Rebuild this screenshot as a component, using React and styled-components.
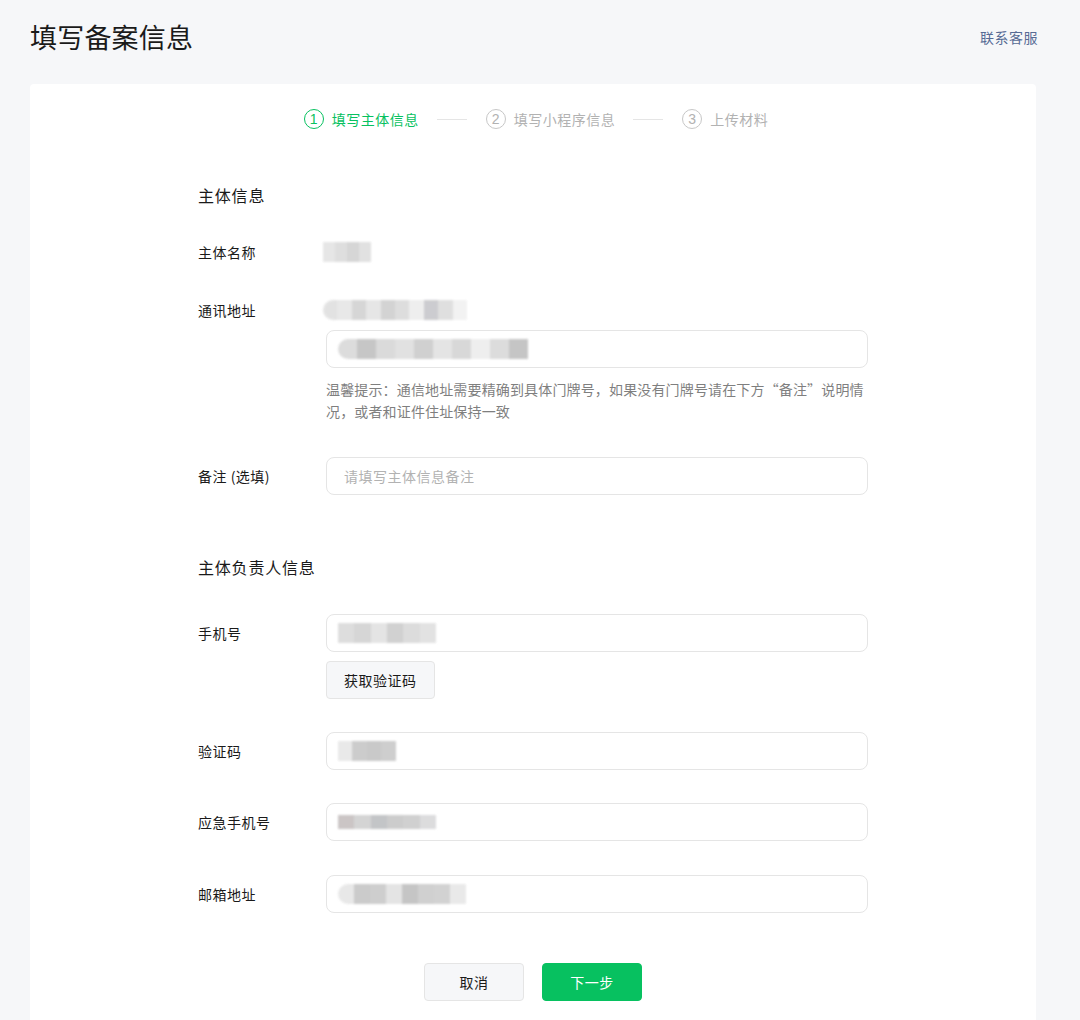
import React from "react";
import styled, { createGlobalStyle } from "styled-components";

const GlobalStyle = createGlobalStyle`
  html, body {
    margin: 0;
    padding: 0;
    background: #f6f7f9;
  }
  body {
    font-family: "Noto Sans CJK SC", "Noto Sans", sans-serif;
    color: #1a1a1a;
    letter-spacing: 0.5px;
  }
  * { box-sizing: border-box; }
`;

const Page = styled.div`
  padding: 0 44px 0 30px;
  min-height: 1020px;
`;

const Header = styled.div`
  height: 76px;
  display: flex;
  align-items: center;
  justify-content: space-between;
  h1 {
    margin: 0 0 3px;
    font-size: 27px;
    font-weight: 400;
    color: #1a1a1a;
    letter-spacing: 0.2px;
  }
  a {
    font-size: 14px;
    color: #576b95;
    text-decoration: none;
    margin-right: -2px;
    margin-bottom: 2px;
  }
`;

const Card = styled.div`
  margin-top: 8px;
  background: #fff;
  border-radius: 4px;
  padding: 24px 0 40px;
`;

const Steps = styled.div`
  display: flex;
  align-items: center;
  justify-content: center;
  height: 24px;
  padding-left: 6px;
  margin-top: -1px;
`;

const Step = styled.div`
  display: flex;
  align-items: center;
  gap: 8px;
  font-size: 14px;
  color: ${(p) => (p.$active ? "#07c160" : "#b2b2b2")};
`;

const StepNum = styled.span`
  width: 20px;
  height: 20px;
  border-radius: 50%;
  border: 1px solid ${(p) => (p.$active ? "#07c160" : "#c7c7c7")};
  display: flex;
  align-items: center;
  justify-content: center;
  font-size: 14px;
  line-height: 1;
  letter-spacing: 0;
  font-family: "Liberation Sans", sans-serif;
`;

const StepLine = styled.span`
  width: 30px;
  height: 1px;
  background: #e5e5e5;
  margin: 0 19px 0 18px;
`;

const Form = styled.div`
  width: 670px;
  margin: 0 auto;
`;

const SectionTitle = styled.div`
  font-size: 16px;
  line-height: 24px;
  letter-spacing: 0.8px;
  color: #1a1a1a;
  margin-top: ${(p) => p.$mt}px;
`;

const Row = styled.div`
  display: grid;
  grid-template-columns: 128px 1fr;
  margin-top: ${(p) => p.$mt}px;
`;

const Label = styled.div`
  font-size: 14px;
  line-height: 38px;
  color: #1a1a1a;
`;

const Content = styled.div`
  display: flex;
  flex-direction: column;
  align-items: flex-start;
`;

const StaticValue = styled.div`
  height: 38px;
  display: flex;
  align-items: center;
  margin-left: -3px;
`;

const Input = styled.div`
  width: 542px;
  height: 38px;
  border: 1px solid #e5e5e5;
  border-radius: 8px;
  display: flex;
  align-items: center;
  padding: 0 11px;
  font-size: 14px;
  color: #b2b2b2;
  margin-top: ${(p) => p.$mt || 0}px;
`;

const Placeholder = styled.span`
  padding-left: 6px;
`;

const Hint = styled.div`
  margin-top: 10px;
  font-size: 14px;
  line-height: 22px;
  letter-spacing: 0.15px;
  color: #7f7f7f;
  width: 545px;
`;

const Blur = styled.span`
  display: inline-block;
  width: ${(p) => p.$w}px;
  height: ${(p) => p.$h || 20}px;
  border-radius: ${(p) => (p.$round ? "10px 0 0 10px" : "0")};
  filter: blur(0.8px);
  opacity: 0.85;
`;

const GhostButton = styled.button`
  height: 38px;
  padding: 0 17px;
  margin-top: ${(p) => p.$mt || 0}px;
  border: 1px solid #e5e5e5;
  border-radius: 4px;
  background: #f6f7f9;
  font-family: inherit;
  font-size: 14px;
  letter-spacing: 0.5px;
  color: #1a1a1a;
  cursor: pointer;
`;

const Actions = styled.div`
  display: flex;
  justify-content: center;
  gap: 18px;
  margin-top: 50px;
`;

const ActionButton = styled.button`
  width: 100px;
  height: 38px;
  border-radius: 4px;
  border: 1px solid ${(p) => (p.$primary ? "#07c160" : "#e5e5e5")};
  background: ${(p) => (p.$primary ? "#07c160" : "#f6f7f9")};
  color: ${(p) => (p.$primary ? "#fff" : "#1a1a1a")};
  font-family: inherit;
  font-size: 14px;
  letter-spacing: 0.5px;
  cursor: pointer;
`;

// greys used to fake the pixelated, blurred values
const blurBg = (tones) => {
  const step = 100 / tones.length;
  const stops = tones
    .map((t, i) => `${t} ${(i * step).toFixed(1)}%, ${t} ${((i + 1) * step).toFixed(1)}%`)
    .join(", ");
  return `linear-gradient(90deg, ${stops})`;
};

const Masked = ({ w, h, tones, round }) => (
  <Blur $w={w} $h={h} $round={round} style={{ background: blurBg(tones) }} />
);

const steps = [
  { n: 1, label: "填写主体信息", active: true },
  { n: 2, label: "填写小程序信息" },
  { n: 3, label: "上传材料" },
];

export default function App() {
  return (
    <>
      <GlobalStyle />
      <Page>
        <Header>
          <h1>填写备案信息</h1>
          <a href="#">联系客服</a>
        </Header>
        <Card>
          <Steps>
            {steps.map((s, i) => (
              <React.Fragment key={s.n}>
                {i > 0 && <StepLine />}
                <Step $active={s.active}>
                  <StepNum $active={s.active}>{s.n}</StepNum>
                  {s.label}
                </Step>
              </React.Fragment>
            ))}
          </Steps>

          <Form>
            <SectionTitle $mt={52}>主体信息</SectionTitle>

            <Row $mt={26}>
              <Label>主体名称</Label>
              <Content>
                <StaticValue>
                  <Masked w={48} tones={["#e2e2e2", "#d9d9d9", "#cfcfcf", "#dcdcdc"]} />
                </StaticValue>
              </Content>
            </Row>

            <Row $mt={20}>
              <Label>通讯地址</Label>
              <Content>
                <StaticValue>
                  <Masked
                    w={144}
                    round
                    tones={["#dedede", "#e4e4e4", "#d0d0d0", "#e2e2e2", "#cccccc", "#d8d8d8", "#ececec", "#c4c4c8", "#dadada", "#f0f0f0"]}
                  />
                </StaticValue>
                <Input $mt={1}>
                  <Masked
                    w={190}
                    round
                    tones={["#d6d6d6", "#bdbdbd", "#d4d4d4", "#dcdcdc", "#c8c8c8", "#e0e0e0", "#d2d2d2", "#ececec", "#d6d6d6", "#bcbcbc"]}
                  />
                </Input>
                <Hint>
                  温馨提示：通信地址需要精确到具体门牌号，如果没有门牌号请在下方“备注”说明情况，或者和证件住址保持一致
                </Hint>
              </Content>
            </Row>

            <Row $mt={35}>
              <Label>备注 (选填)</Label>
              <Content>
                <Input>
                  <Placeholder>请填写主体信息备注</Placeholder>
                </Input>
              </Content>
            </Row>

            <SectionTitle $mt={60}>主体负责人信息</SectionTitle>

            <Row $mt={35}>
              <Label>手机号</Label>
              <Content>
                <Input>
                  <Masked
                    w={98}
                    tones={["#d8d8d8", "#cfcfcf", "#e0e0e0", "#c9c9c9", "#d6d6d6", "#dedede"]}
                  />
                </Input>
                <GhostButton $mt={9}>获取验证码</GhostButton>
              </Content>
            </Row>

            <Row $mt={33}>
              <Label>验证码</Label>
              <Content>
                <Input>
                  <Masked w={58} tones={["#e6e6e6", "#c4c4c4", "#c0c0c0", "#c6c6c6"]} />
                </Input>
              </Content>
            </Row>

            <Row $mt={33}>
              <Label>应急手机号</Label>
              <Content>
                <Input>
                  <Masked
                    w={98}
                    h={14}
                    tones={["#c2bcbc", "#cdcdcd", "#b9bbbe", "#c4c4c4", "#c8c8c8", "#d6d6d8"]}
                  />
                </Input>
              </Content>
            </Row>

            <Row $mt={34}>
              <Label>邮箱地址</Label>
              <Content>
                <Input>
                  <Masked
                    w={128}
                    round
                    tones={["#e4e4e4", "#c2c2c2", "#c6c6c6", "#e0e0e0", "#bcbcbc", "#c8c8c8", "#cbcbcb", "#e6e6e6"]}
                  />
                </Input>
              </Content>
            </Row>

            <Actions>
              <ActionButton>取消</ActionButton>
              <ActionButton $primary>下一步</ActionButton>
            </Actions>
          </Form>
        </Card>
      </Page>
    </>
  );
}
